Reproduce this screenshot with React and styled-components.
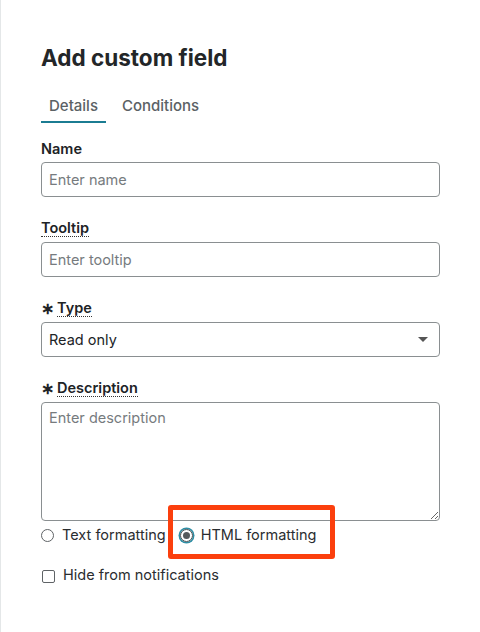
import React from 'react'
import styled, {createGlobalStyle} from 'styled-components'

const GlobalStyle = createGlobalStyle`
    html, body {
        margin: 0;
        padding: 0;
        background: #fff;
    }
    body {
        font-family: Inter, "Noto Sans", "Liberation Sans", sans-serif;
        color: #16191f;
    }
`

const Panel = styled.div`
    position: relative;
    box-sizing: border-box;
    width: 480px;
    min-height: 632px;
    padding: 44px 40px 0 40px;
    border-left: 1px solid #e4e7e8;
    background: #fff;
`

const Title = styled.h1`
    margin: 0;
    font-size: 22.5px;
    line-height: 28px;
    font-weight: 700;
    color: #232628;
`

const Tabs = styled.div`
    display: flex;
    gap: 8px;
    margin-top: 24px;
`

const Tab = styled.div`
    padding: 0 8px 5px;
    font-size: 15px;
    line-height: 20px;
    font-weight: 500;
    color: #5b6165;
    border-bottom: 2px solid ${props => props.active ? '#1b7c92' : 'transparent'};
`

const Form = styled.div`
    display: flex;
    flex-direction: column;
    gap: 21px;
    margin-top: 15px;
`

const Field = styled.div`
    display: flex;
    flex-direction: column;
    gap: 4px;
`

const Label = styled.div`
    display: flex;
    align-items: center;
    gap: 3px;
    height: 20px;
    font-size: 14.5px;
    font-weight: 600;
    color: #202326;
`

const LabelText = styled.span`
    border-bottom: ${props => props.dotted ? '1.5px dotted #333' : 'none'};
    line-height: 17px;
`

const Star = styled.span`
    font-size: 16px;
    font-weight: 700;
    line-height: 17px;
`

const boxStyles = `
    box-sizing: border-box;
    width: 100%;
    border: 1px solid #8a8f91;
    border-radius: 4px;
    background: #fff;
    font-family: Inter, "Noto Sans", "Liberation Sans", sans-serif;
    font-size: 14.5px;
    color: #202326;
    outline: none;
`

const Input = styled.input`
    ${boxStyles}
    height: 35px;
    padding: 0 7px;
    &::placeholder {
        color: #767b7e;
    }
`

const Select = styled.div`
    ${boxStyles}
    height: 35px;
    padding: 0 7px;
    display: flex;
    align-items: center;
    justify-content: space-between;
`

const Caret = styled.span`
    width: 0;
    height: 0;
    margin-right: 4px;
    border-left: 5px solid transparent;
    border-right: 5px solid transparent;
    border-top: 5px solid #555;
`

const TextArea = styled.textarea`
    ${boxStyles}
    display: block;
    height: 119px;
    padding: 6px 7px;
    resize: vertical;
    &::placeholder {
        color: #767b7e;
    }
`

const Options = styled.div`
    display: flex;
    flex-direction: column;
    gap: 20px;
    margin-top: -17px;
`

const RadioRow = styled.div`
    display: flex;
    align-items: center;
    gap: 14px;
    height: 20px;
`

const Choice = styled.label`
    display: flex;
    align-items: center;
    gap: 8px;
    font-size: 14.5px;
    line-height: 20px;
    color: #2a2d30;
`

const Radio = styled.span`
    box-sizing: border-box;
    width: 13px;
    height: 13px;
    border-radius: 50%;
    border: 1px solid ${props => props.checked ? '#4a4f52' : '#5f6366'};
    display: flex;
    align-items: center;
    justify-content: center;
    box-shadow: ${props => props.checked ? '0 0 0 1.5px #2e8ea5' : 'none'};
    &::after {
        content: '';
        display: ${props => props.checked ? 'block' : 'none'};
        width: 7px;
        height: 7px;
        border-radius: 50%;
        background: #555a5d;
    }
`

const Check = styled.span`
    box-sizing: border-box;
    width: 13px;
    height: 13px;
    margin-left: 1px;
    border: 1px solid #5f6366;
    border-radius: 2px;
    margin-top: 2px;
`

const Highlight = styled.div`
    position: absolute;
    left: 167px;
    top: 505px;
    width: 167px;
    height: 54px;
    box-sizing: border-box;
    border: 5px solid #fb3f0d;
    border-radius: 3px;
    pointer-events: none;
`

export default function App() {
    return (
        <Panel>
            <GlobalStyle/>
            <Title>Add custom field</Title>
            <Tabs>
                <Tab active>Details</Tab>
                <Tab>Conditions</Tab>
            </Tabs>
            <Form>
                <Field>
                    <Label><LabelText>Name</LabelText></Label>
                    <Input placeholder="Enter name"/>
                </Field>
                <Field>
                    <Label><LabelText dotted>Tooltip</LabelText></Label>
                    <Input placeholder="Enter tooltip"/>
                </Field>
                <Field>
                    <Label><Star>∗</Star><LabelText dotted>Type</LabelText></Label>
                    <Select>
                        <span>Read only</span>
                        <Caret/>
                    </Select>
                </Field>
                <Field>
                    <Label><Star>∗</Star><LabelText dotted>Description</LabelText></Label>
                    <TextArea placeholder="Enter description"/>
                </Field>
                <Options>
                    <RadioRow>
                        <Choice><Radio/>Text formatting</Choice>
                        <Choice><Radio checked/>HTML formatting</Choice>
                    </RadioRow>
                    <Choice><Check/>Hide from notifications</Choice>
                </Options>
            </Form>
            <Highlight/>
        </Panel>
    )
}
